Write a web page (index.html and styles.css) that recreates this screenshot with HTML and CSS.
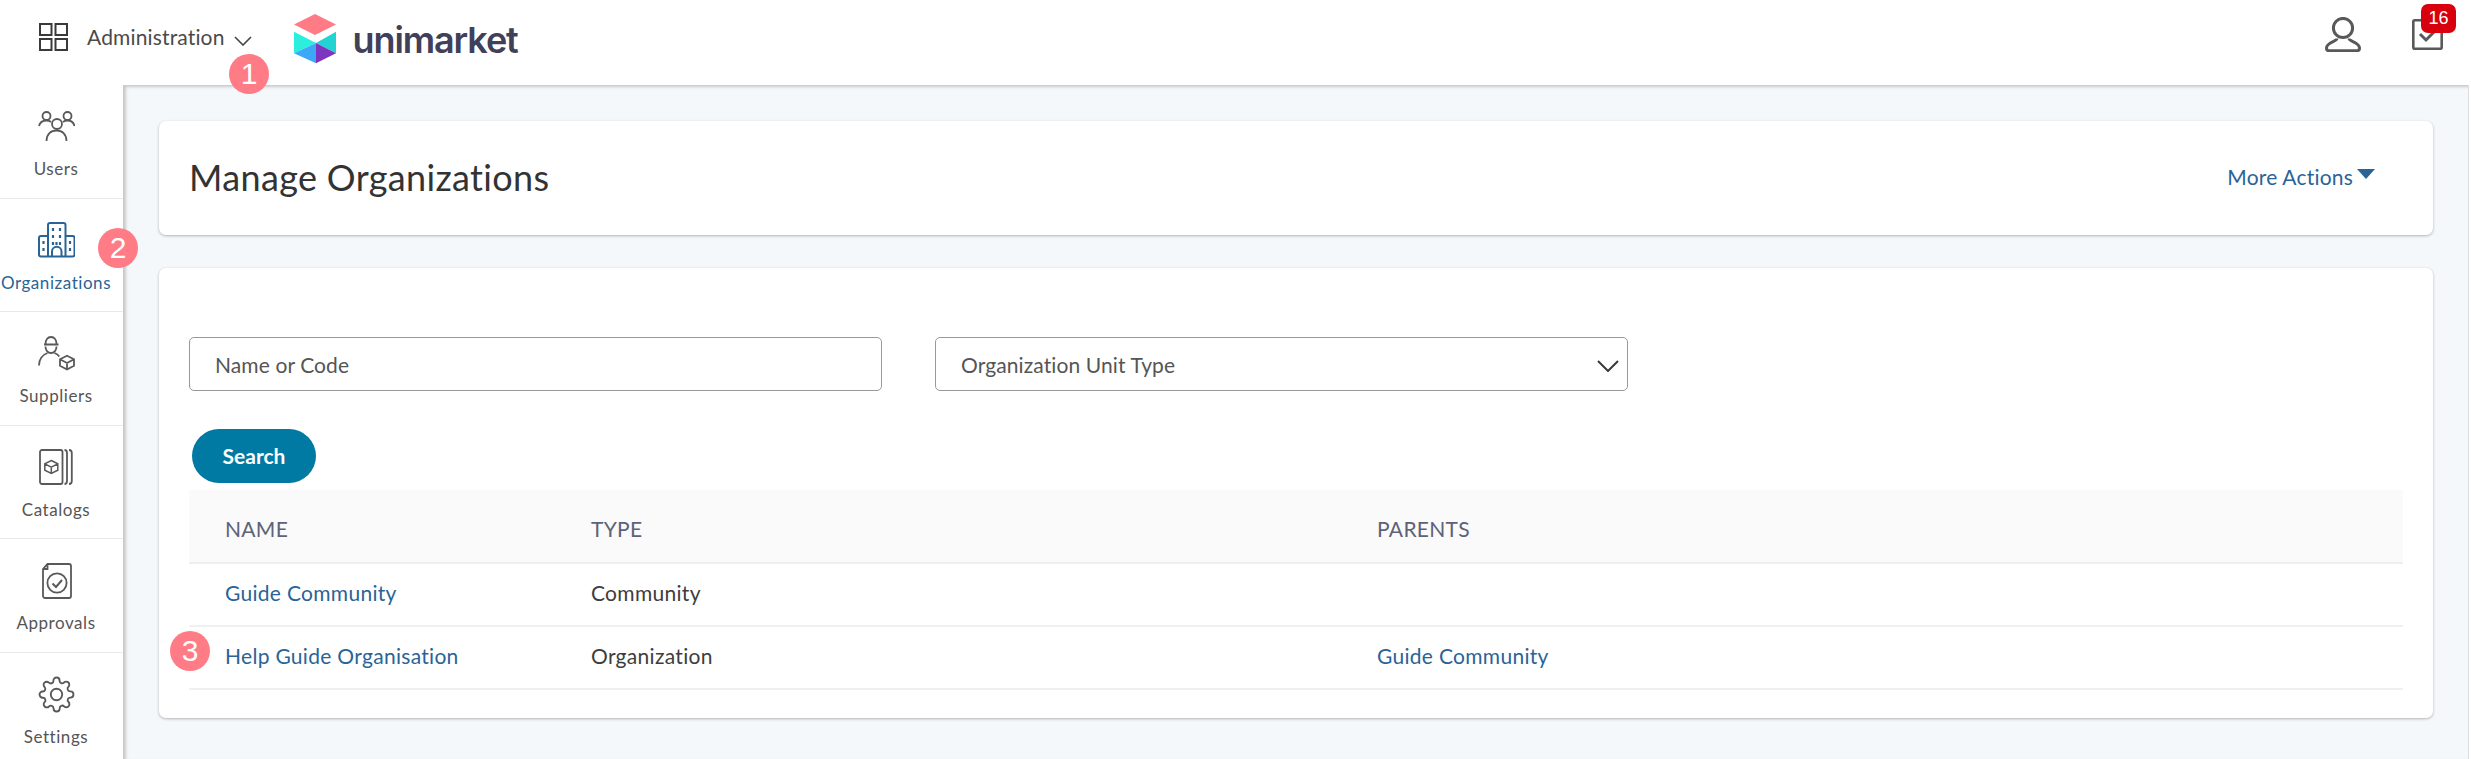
FILE: index.html
```html
<!DOCTYPE html>
<html lang="en">
<head>
<meta charset="utf-8">
<title>Manage Organizations</title>
<link rel="stylesheet" href="styles.css">
</head>
<body>
<header class="topbar">
  <svg class="grid-icon" viewBox="0 0 29 28" fill="none" stroke="#3a3a3a" stroke-width="2"><rect x="1" y="1" width="11.5" height="11"/><rect x="16.5" y="1" width="11.5" height="11"/><rect x="1" y="16" width="11.5" height="11"/><rect x="16.5" y="16" width="11.5" height="11"/></svg>
  <span class="module">Administration</span>
  <svg class="module-chevron" viewBox="0 0 18 10" fill="none" stroke="#444" stroke-width="1.6"><path d="M1 1l8 8 8-8"/></svg>
  <div class="logo">
    <svg class="logo-mark" viewBox="0 0 42 50"><path fill="#ff7b85" d="M21 0l21 10.5L21 21 0 10.5z"/><path fill="#2aefdc" d="M0 17.7L22 29 0 39.3z"/><path fill="#22d3d3" d="M42 17.7L22 29l20 10.3z"/><path fill="#3ea8f8" d="M0 39.3L22 29v20.3z"/><path fill="#7d35c0" d="M42 39.3L22 29v20.3z"/></svg>
    <span class="logo-text">unimarket</span>
  </div>
  <div class="top-actions">
    <svg class="user-icon" viewBox="0 0 36 35" fill="none" stroke="#595959" stroke-width="3"><circle cx="18" cy="11" r="9.6"/><path d="M12 21.5c0 3-10.500 3.500-10.500 9.500 0 2 1 2.700 2.500 2.700h28c1.500 0 2.500-.7 2.500-2.700 0-6-10.500-6.500-10.500-9.500" stroke-linejoin="round"/></svg>
    <div class="tasks">
      <svg class="task-icon" viewBox="0 0 31 31" fill="none" stroke="#595959" stroke-width="2.600"><rect x="1.300" y="1.300" width="28.400" height="28.400" rx="1.500"/><path d="M8 15l6 6 10-10" stroke-width="3"/></svg>
      <span class="task-count">16</span>
    </div>
  </div>
</header>
<div class="shell">
  <nav class="sidebar">
    <a class="nav-item">
      <svg class="nav-icon" viewBox="0 0 37 37" fill="none" stroke="#595959" stroke-width="1.800"><circle cx="19" cy="16" r="5"/><path d="M8.500 33c0-7 4.500-10.500 10-10.500s10 3.500 10 10.500"/><circle cx="8.500" cy="8" r="4"/><circle cx="29.500" cy="8" r="4"/><path d="M1 18c1-4 4-5.500 7.500-5.500 2 0 3.500.5 4.500 1.500M36.500 18c-1-4-3.500-5.500-7-5.500-2 0-3.500.5-4.500 1.500"/></svg>
      <span>Users</span>
    </a>
    <a class="nav-item active">
      <svg class="nav-icon" viewBox="0 0 37 37" fill="none" stroke="#2a6496" stroke-width="2"><path d="M10 34.500V3a2 2 0 0 1 2-2h13.500a2 2 0 0 1 2 2v31.500M10 14H3a2 2 0 0 0-2 2v16.500a2 2 0 0 0 2 2h31.500a2 2 0 0 0 2-2V16a2 2 0 0 0-2-2h-7"/><path d="M14 34.500v-5a4.700 4.700 0 0 1 9.500 0v5"/><path stroke-width="2.200" d="M15 6v3M22 6v3M15 13v3M22 13v3M15 20v3M22 20v3M5.500 19v3M5.500 26v3M32 19v3M32 26v3M18.500 20v3"/></svg>
      <span>Organizations</span>
    </a>
    <a class="nav-item">
      <svg class="nav-icon" viewBox="0 0 37 37" fill="none" stroke="#595959" stroke-width="1.800"><path d="M6 9.500h14.500M7.500 9c0-4 2-7 5.500-7s5.500 3 5.500 7"/><path d="M7.500 11.500c0 3.500 2.200 6.500 5.500 6.500s5.500-3 5.500-6.500"/><path d="M1 30.500c0-7 4.500-11 8.500-12.500M16.500 18c2 .8 3.500 1.800 4.800 3.500"/><path d="M29 20.800l7 3.500v6.500l-7 3.700-7-3.700v-6.500zM22 24.300l7 3.700 7-3.700M29 28v6.500"/></svg>
      <span>Suppliers</span>
    </a>
    <a class="nav-item">
      <svg class="nav-icon" viewBox="0 0 37 37" fill="none" stroke="#595959" stroke-width="1.800"><rect x="2" y="1" width="22.500" height="34" rx="2"/><path d="M26.500 1c2 0 2.500 1 2.500 3v28c0 2-.5 3-2.500 3M31 1c2 0 2.800 1 2.800 3v28c0 2-.8 3-2.800 3"/><path stroke-width="1.500" d="M13.300 11.500l6.500 3.300v6.400l-6.500 3.300-6.500-3.300v-6.400zM6.800 14.800l6.500 3.300 6.500-3.300M13.300 18.100v6.400"/></svg>
      <span>Catalogs</span>
    </a>
    <a class="nav-item">
      <svg class="nav-icon" viewBox="0 0 37 37" fill="none" stroke="#595959" stroke-width="1.800"><path d="M9.500 2H31a2 2 0 0 1 2 2v30a2 2 0 0 1-2 2H7a2 2 0 0 1-2-2V7zM9.500 2v5H5"/><circle cx="19" cy="21" r="9.600"/><path d="M14.500 21.500l3.500 3.500 6-7" stroke-width="2"/></svg>
      <span>Approvals</span>
    </a>
    <a class="nav-item">
      <svg class="nav-icon" viewBox="0 0 24 24" fill="none" stroke="#595959" stroke-width="1.200"><circle cx="12" cy="12" r="3.700"/><path d="M19.400 15a1.650 1.650 0 0 0 .33 1.820l.06.06a2 2 0 0 1 0 2.830 2 2 0 0 1-2.830 0l-.06-.06a1.650 1.650 0 0 0-1.820-.33 1.650 1.650 0 0 0-1 1.510V21a2 2 0 0 1-2 2 2 2 0 0 1-2-2v-.09A1.650 1.650 0 0 0 9 19.400a1.650 1.650 0 0 0-1.820.33l-.06.06a2 2 0 0 1-2.830 0 2 2 0 0 1 0-2.830l.06-.06a1.650 1.650 0 0 0 .33-1.820 1.650 1.650 0 0 0-1.510-1H3a2 2 0 0 1-2-2 2 2 0 0 1 2-2h.09A1.650 1.650 0 0 0 4.600 9a1.650 1.650 0 0 0-.33-1.820l-.06-.06a2 2 0 0 1 0-2.830 2 2 0 0 1 2.830 0l.06.06a1.650 1.650 0 0 0 1.820.33H9a1.650 1.650 0 0 0 1-1.510V3a2 2 0 0 1 2-2 2 2 0 0 1 2 2v.09a1.650 1.650 0 0 0 1 1.510 1.650 1.650 0 0 0 1.820-.33l.06-.06a2 2 0 0 1 2.830 0 2 2 0 0 1 0 2.830l-.06.06a1.650 1.650 0 0 0-.33 1.820V9a1.650 1.650 0 0 0 1.510 1H21a2 2 0 0 1 2 2 2 2 0 0 1-2 2h-.09a1.650 1.650 0 0 0-1.510 1z"/></svg>
      <span>Settings</span>
    </a>
  </nav>
  <main class="content">
    <section class="card title-card">
      <h1>Manage Organizations</h1>
      <a class="more-actions">More Actions<i class="caret"></i></a>
    </section>
    <section class="card search-card">
      <div class="filters">
        <div class="field">Name or Code</div>
        <div class="field select">Organization Unit Type
          <svg class="select-chevron" viewBox="0 0 22 12" fill="none" stroke="#3a3a3a" stroke-width="2"><path d="M1 1l10 10L21 1"/></svg>
        </div>
      </div>
      <button class="search-btn">Search</button>
      <table class="results">
        <thead><tr><th class="col-name">NAME</th><th class="col-type">TYPE</th><th>PARENTS</th></tr></thead>
        <tbody>
          <tr><td><a>Guide Community</a></td><td>Community</td><td></td></tr>
          <tr><td><a>Help Guide Organisation</a></td><td>Organization</td><td><a>Guide Community</a></td></tr>
        </tbody>
      </table>
    </section>
  </main>
</div>
<span class="step step-1">1</span>
<span class="step step-2">2</span>
<span class="step step-3">3</span>
</body>
</html>
```
FILE: styles.css
```css
* { box-sizing: border-box; }
html, body { margin: 0; height: 759px; overflow: hidden; }
body { font-family: Lato, "Open Sans", sans-serif; color: #333; background: #fff; position: relative; display: flex; flex-direction: column; }

.topbar { height: 85px; flex: none; display: flex; align-items: flex-start; padding-left: 39px; background: #fff; }
.grid-icon { width: 29px; height: 28px; margin-top: 23px; }
.module { margin: 24px 0 0 19px; font-size: 21px; line-height: 26px; letter-spacing: .15px; color: #4a4a4a; }
.module-chevron { width: 18px; height: 10px; margin: 36px 0 0 9px; }
.logo { display: flex; align-items: flex-start; margin-left: 42px; }
.logo-mark { width: 42px; height: 50px; margin-top: 14px; }
.logo-text { margin: 18px 0 0 17px; font-family: Inter, sans-serif; font-weight: 600; font-size: 36px; line-height: 44px; letter-spacing: -1.1px; color: #40405a; }
.top-actions { margin-left: auto; display: flex; align-items: flex-start; padding-right: 28px; }
.user-icon { width: 36px; height: 35px; margin-top: 17px; }
.tasks { position: relative; width: 31px; height: 31px; margin: 19px 0 0 51px; }
.task-icon { display: block; width: 31px; height: 31px; }
.task-count { position: absolute; left: 9px; top: -15px; width: 35px; height: 29px; border-radius: 7px; background: #d9000d; color: #fff; font-family: "Liberation Sans", sans-serif; font-size: 18px; line-height: 28px; text-align: center; }

.shell { flex: 1; display: flex; min-height: 0; }
.sidebar { width: 123px; flex: none; padding-right: 11px; overflow: hidden; }
.nav-item { display: flex; flex-direction: column; align-items: center; height: 113.5px; padding-top: 23px; margin-right: -11px; padding-right: 11px; border-bottom: 1px solid #e9e9e9; font-size: 17px; line-height: 22px; letter-spacing: .55px; color: #555; white-space: nowrap; }
.nav-item span { margin-top: 13px; }
.nav-item.active { color: #2a6496; }
.nav-icon { width: 37px; height: 37px; flex: none; }

.content { flex: 1; margin-right: 3px; padding: 36px 35px 0 36px; background: #f5f8fb; box-shadow: inset 3px 2px 3px #c9c9c9; border-right: 1px solid #ddd; }
.card { background: #fff; border-radius: 7px; box-shadow: 0 1px 3px rgba(0,0,0,.28); }
.title-card { height: 114px; display: flex; align-items: center; justify-content: space-between; padding: 0 58px 3px 30px; }
h1 { margin: 0; font-size: 36px; font-weight: 400; letter-spacing: .35px; color: #333; }
.more-actions { display: flex; align-items: center; font-size: 21px; letter-spacing: .2px; color: #2a6496; }
.caret { width: 0; height: 0; margin: -6px 0 0 4px; border: 9px solid transparent; border-top: 10px solid #2a6496; border-bottom: 0; }

.search-card { height: 450px; margin-top: 33px; padding: 69px 30px 0; }
.filters { display: flex; gap: 53px; }
.field { position: relative; width: 693px; height: 54px; border: 1px solid #999; border-radius: 5px; padding-left: 25px; font-size: 21px; line-height: 53px; letter-spacing: .1px; color: #555; }
.select-chevron { position: absolute; right: 8px; top: 22px; width: 22px; height: 12px; }
.search-btn { display: block; width: 124px; height: 54px; margin: 38px 0 7px 3px; padding-bottom: 2px; border: 0; border-radius: 27px; background: #007aa3; color: #fff; font: 700 21px Lato, sans-serif; }

.results { width: 2214px; border-collapse: collapse; table-layout: fixed; font-size: 21px; letter-spacing: .3px; }
.results th { height: 73px; background: #fafafa; border-bottom: 2px solid #eee; padding: 4px 0 0 36px; text-align: left; font-weight: 400; color: #5d6279; }
.results td { height: 63px; border-bottom: 2px solid #f0f0f0; padding: 0 0 4px 36px; color: #3d3d3d; }
.results th + th, .results td + td { padding-left: 0; }
.results a { color: #2a6496; }
.col-name { width: 402px; }
.col-type { width: 786px; }

.step { position: absolute; width: 40px; height: 40px; border-radius: 50%; background: #ff7b85; color: #fff; font-family: "Liberation Sans", sans-serif; font-size: 30px; line-height: 40px; text-align: center; }
.step-1 { left: 229px; top: 54px; }
.step-2 { left: 98px; top: 228px; }
.step-3 { left: 170px; top: 631px; }
```
